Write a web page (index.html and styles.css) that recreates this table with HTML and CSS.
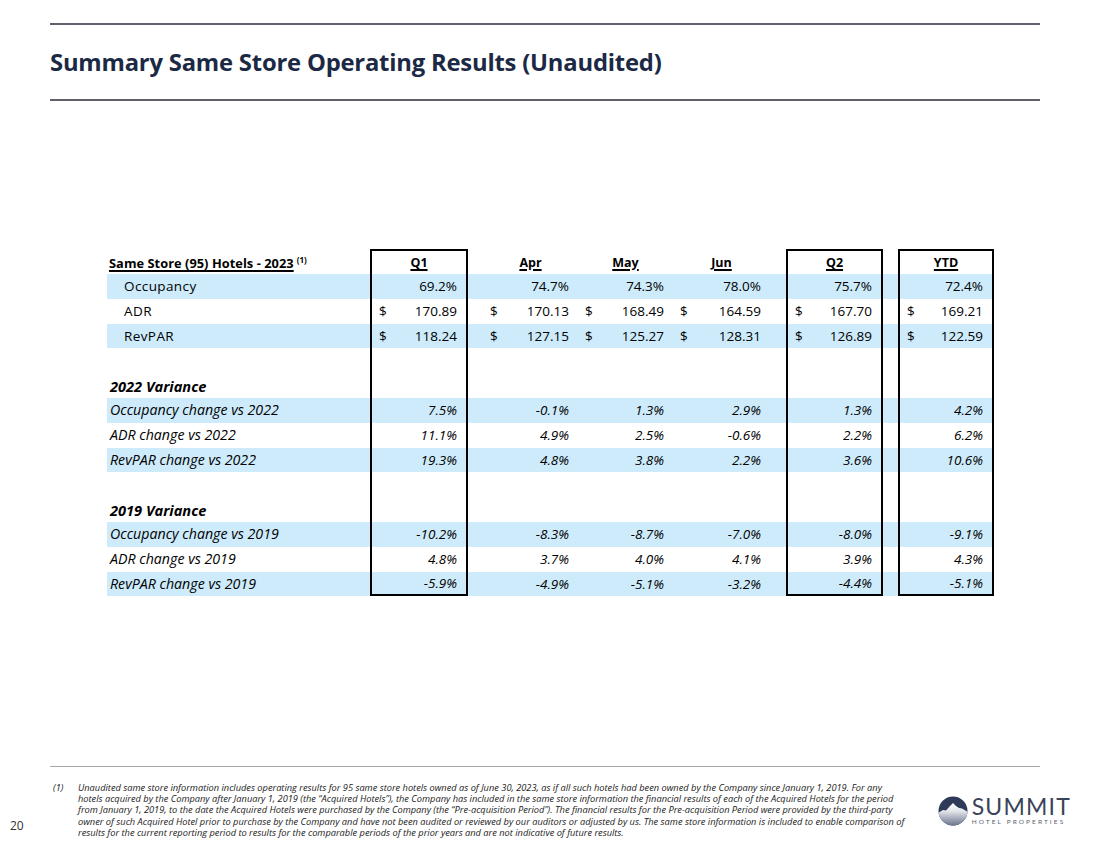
FILE: index.html
```html
<!DOCTYPE html>
<html>
<head>
<meta charset="utf-8">
<title>Summary Same Store Operating Results</title>
<link rel="stylesheet" href="styles.css">
</head>
<body>
<div class="page">
  <header class="head">
    <div class="rule rule-top"></div>
    <h1 class="title">Summary Same Store Operating Results (Unaudited)</h1>
    <div class="rule rule-bottom"></div>
  </header>

  <main class="main">
    <table class="results">
      <colgroup>
        <col class="w-label"><col class="w-box"><col class="w-gap"><col class="w-m"><col class="w-m"><col class="w-m2"><col class="w-gap2"><col class="w-box2"><col class="w-gap"><col class="w-box3">
      </colgroup>
      <tr class="hdr">
        <td class="lbl"><span class="u">Same Store (95) Hotels - 2023</span><sup class="fn">(1)</sup></td>
        <td class="box top ctr"><span class="u">Q1</span></td><td></td>
        <td class="ctr"><span class="u">Apr</span></td>
        <td class="ctr"><span class="u">May</span></td>
        <td class="ctr"><span class="u">Jun</span></td><td></td>
        <td class="box top ctr"><span class="u">Q2</span></td><td></td>
        <td class="box top ctr"><span class="u">YTD</span></td>
      </tr>
      <tr class="band">
        <td class="lbl ind">Occupancy</td>
        <td class="box num">69.2%</td><td></td>
        <td class="num">74.7%</td><td class="num">74.3%</td><td class="num">78.0%</td><td></td>
        <td class="box num">75.7%</td><td></td>
        <td class="box num">72.4%</td>
      </tr>
      <tr>
        <td class="lbl ind">ADR</td>
        <td class="box num"><div class="dv"><span>$</span><span>170.89</span></div></td><td></td>
        <td class="num"><div class="dv"><span>$</span><span>170.13</span></div></td>
        <td class="num"><div class="dv"><span>$</span><span>168.49</span></div></td>
        <td class="num"><div class="dv"><span>$</span><span>164.59</span></div></td><td></td>
        <td class="box num"><div class="dv"><span>$</span><span>167.70</span></div></td><td></td>
        <td class="box num"><div class="dv"><span>$</span><span>169.21</span></div></td>
      </tr>
      <tr class="band">
        <td class="lbl ind">RevPAR</td>
        <td class="box num"><div class="dv"><span>$</span><span>118.24</span></div></td><td></td>
        <td class="num"><div class="dv"><span>$</span><span>127.15</span></div></td>
        <td class="num"><div class="dv"><span>$</span><span>125.27</span></div></td>
        <td class="num"><div class="dv"><span>$</span><span>128.31</span></div></td><td></td>
        <td class="box num"><div class="dv"><span>$</span><span>126.89</span></div></td><td></td>
        <td class="box num"><div class="dv"><span>$</span><span>122.59</span></div></td>
      </tr>
      <tr>
        <td></td><td class="box"></td><td></td><td></td><td></td><td></td><td></td><td class="box"></td><td></td><td class="box"></td>
      </tr>
      <tr class="it">
        <td class="lbl sec">2022 Variance</td><td class="box"></td><td></td><td></td><td></td><td></td><td></td><td class="box"></td><td></td><td class="box"></td>
      </tr>
      <tr class="band it">
        <td class="lbl">Occupancy change vs 2022</td>
        <td class="box num">7.5%</td><td></td>
        <td class="num">-0.1%</td><td class="num">1.3%</td><td class="num">2.9%</td><td></td>
        <td class="box num">1.3%</td><td></td>
        <td class="box num">4.2%</td>
      </tr>
      <tr class="it">
        <td class="lbl">ADR change vs 2022</td>
        <td class="box num">11.1%</td><td></td>
        <td class="num">4.9%</td><td class="num">2.5%</td><td class="num">-0.6%</td><td></td>
        <td class="box num">2.2%</td><td></td>
        <td class="box num">6.2%</td>
      </tr>
      <tr class="band it">
        <td class="lbl">RevPAR change vs 2022</td>
        <td class="box num">19.3%</td><td></td>
        <td class="num">4.8%</td><td class="num">3.8%</td><td class="num">2.2%</td><td></td>
        <td class="box num">3.6%</td><td></td>
        <td class="box num">10.6%</td>
      </tr>
      <tr>
        <td></td><td class="box"></td><td></td><td></td><td></td><td></td><td></td><td class="box"></td><td></td><td class="box"></td>
      </tr>
      <tr class="it">
        <td class="lbl sec">2019 Variance</td><td class="box"></td><td></td><td></td><td></td><td></td><td></td><td class="box"></td><td></td><td class="box"></td>
      </tr>
      <tr class="band it">
        <td class="lbl">Occupancy change vs 2019</td>
        <td class="box num">-10.2%</td><td></td>
        <td class="num">-8.3%</td><td class="num">-8.7%</td><td class="num">-7.0%</td><td></td>
        <td class="box num">-8.0%</td><td></td>
        <td class="box num">-9.1%</td>
      </tr>
      <tr class="it">
        <td class="lbl">ADR change vs 2019</td>
        <td class="box num">4.8%</td><td></td>
        <td class="num">3.7%</td><td class="num">4.0%</td><td class="num">4.1%</td><td></td>
        <td class="box num">3.9%</td><td></td>
        <td class="box num">4.3%</td>
      </tr>
      <tr class="band it last">
        <td class="lbl">RevPAR change vs 2019</td>
        <td class="box bot num">-5.9%</td><td></td>
        <td class="num">-4.9%</td><td class="num">-5.1%</td><td class="num">-3.2%</td><td></td>
        <td class="box bot num">-4.4%</td><td></td>
        <td class="box bot num">-5.1%</td>
      </tr>
    </table>
  </main>

  <footer class="foot">
    <div class="rule rule-foot"></div>
    <div class="foot-row">
      <div class="pagenum">20</div>
      <div class="note">
        <span class="note-mark">(1)</span>
        <p class="note-text">Unaudited same store information includes operating results for 95 same store hotels owned as of June 30, 2023, as if all such hotels had been owned by the Company since January 1, 2019. For any<br>hotels acquired by the Company after January 1, 2019 (the “Acquired Hotels”), the Company has included in the same store information the financial results of each of the Acquired Hotels for the period<br>from January 1, 2019, to the date the Acquired Hotels were purchased by the Company (the “Pre-acquisition Period”). The financial results for the Pre-acquisition Period were provided by the third-party<br>owner of such Acquired Hotel prior to purchase by the Company and have not been audited or reviewed by our auditors or adjusted by us. The same store information is included to enable comparison of<br>results for the current reporting period to results for the comparable periods of the prior years and are not indicative of future results.</p>
      </div>
      <div class="logo">
        <svg class="logo-mark" width="30" height="30" viewBox="0 0 30 30" aria-hidden="true">
          <defs>
            <clipPath id="lc"><circle cx="15" cy="15" r="14.5"/></clipPath>
            <linearGradient id="lg" x1="0" y1="0" x2="0" y2="1">
              <stop offset="0" stop-color="#ffffff"/>
              <stop offset="0.35" stop-color="#e3e6eb"/>
              <stop offset="1" stop-color="#66708a"/>
            </linearGradient>
          </defs>
          <g clip-path="url(#lc)">
            <rect width="30" height="30" fill="#2e3a57"/>
            <path d="M0 17 L5 14 L8 14.5 L12 10 L15 7 L18 10 L21 12 L24 12.5 L30 16 V30 H0 Z" fill="url(#lg)"/>
          </g>
        </svg>
        <div class="logo-words">
          <div class="logo-name">SUMMIT</div>
          <div class="logo-sub">HOTEL PROPERTIES</div>
        </div>
      </div>
    </div>
  </footer>
</div>
</body>
</html>
```

FILE: styles.css
```css
* { box-sizing: border-box; }

html, body {
  margin: 0;
  padding: 0;
  background: #ffffff;
}

body {
  font-family: "Open Sans", "Noto Sans", "Liberation Sans", sans-serif;
  color: #000;
}

.page {
  width: 1100px;
  height: 849px;
  display: flex;
  flex-direction: column;
  overflow: hidden;
}

/* ---------- header ---------- */
.head {
  padding: 23px 60px 0 50px;
}

.rule {
  height: 2px;
  background: #5f626a;
}

.title {
  margin: 0;
  height: 74px;
  display: flex;
  align-items: center;
  font-size: 23.8px;
  font-weight: 700;
  color: #1c2945;
  letter-spacing: -0.2px;
}

/* ---------- table ---------- */
.main {
  flex: 1;
  padding: 148px 0 0 107px;
}

.results {
  table-layout: fixed;
  width: 887px;
  border-collapse: separate;
  border-spacing: 0;
  font-size: 13.5px;
}

.w-label { width: 263px; }
.w-box  { width: 98px; }
.w-gap  { width: 15px; }
.w-m    { width: 95px; }
.w-m2   { width: 97px; }
.w-gap2 { width: 16px; }
.w-box2 { width: 97px; }
.w-box3 { width: 96px; }

.results td {
  height: 24.8px;
  padding: 0 9px 0 7px;
  vertical-align: middle;
  white-space: nowrap;
  line-height: 18px;
}

.results tr.hdr td {
  height: 25px;
  vertical-align: bottom;
  padding-bottom: 2px;
  font-weight: 700;
  font-size: 12.5px;
}

.results tr.band td { background: #cdebfb; }

.results td.box {
  border-left: 2px solid #000;
  border-right: 2px solid #000;
}
.results td.box.top { border-top: 2px solid #000; }
.results td.box.bot { border-bottom: 2px solid #000; }

.results td.lbl { padding-left: 3px; }
.results td.lbl.ind { padding-left: 17px; letter-spacing: 0.4px; }
.results tr.hdr td.lbl { padding-left: 2px; font-size: 12.8px; letter-spacing: 0.05px; }

.results tr.it td.lbl { font-size: 14.2px; }
.results tr.it td.sec { font-weight: 700; font-size: 14.6px; }

.results tr.it td { font-style: italic; }

.u { text-decoration: underline; text-underline-offset: 2px; text-decoration-thickness: 1.5px; }

.fn {
  font-size: 8px;
  margin-left: 3px;
  vertical-align: 5px;
  line-height: 0;
}

.ctr { text-align: center; }
.results tr.hdr td.ctr { padding-left: 0; padding-right: 0; }

.num { text-align: right; }

.dv {
  display: flex;
  justify-content: space-between;
}

/* ---------- footer ---------- */
.foot {
  padding: 0 60px 11px 0;
}

.rule-foot {
  height: 1px;
  margin-left: 50px;
  background: #a4a6ab;
}

.foot-row {
  display: flex;
  align-items: flex-start;
  padding-top: 15px;
}

.pagenum {
  width: 53px;
  padding: 36px 0 0 10px;
  font-size: 12px;
  line-height: 16px;
  color: #333;
  font-family: "Open Sans", sans-serif;
}

.note {
  display: flex;
  font-style: italic;
  font-size: 9.25px;
  line-height: 11.2px;
  color: #1a1a1a;
}

.note-mark { width: 25px; flex: none; }

.note-text {
  margin: 0;
  white-space: nowrap;
}

.logo {
  margin-left: auto;
  margin-right: -31px;
  margin-top: 14px;
  display: flex;
  align-items: center;
  gap: 4px;
}

.logo-mark { display: block; }

.logo-words {
  display: flex;
  flex-direction: column;
  align-items: flex-start;
}

.logo-name {
  font-family: "Lato", "Open Sans", sans-serif;
  font-size: 23px;
  line-height: 20px;
  letter-spacing: 1.2px;
  color: #394359;
}

.logo-sub {
  font-family: "Lato", "Open Sans", sans-serif;
  font-size: 6.5px;
  letter-spacing: 2.1px;
  color: #5a6070;
  margin-top: 2px;
}
```
